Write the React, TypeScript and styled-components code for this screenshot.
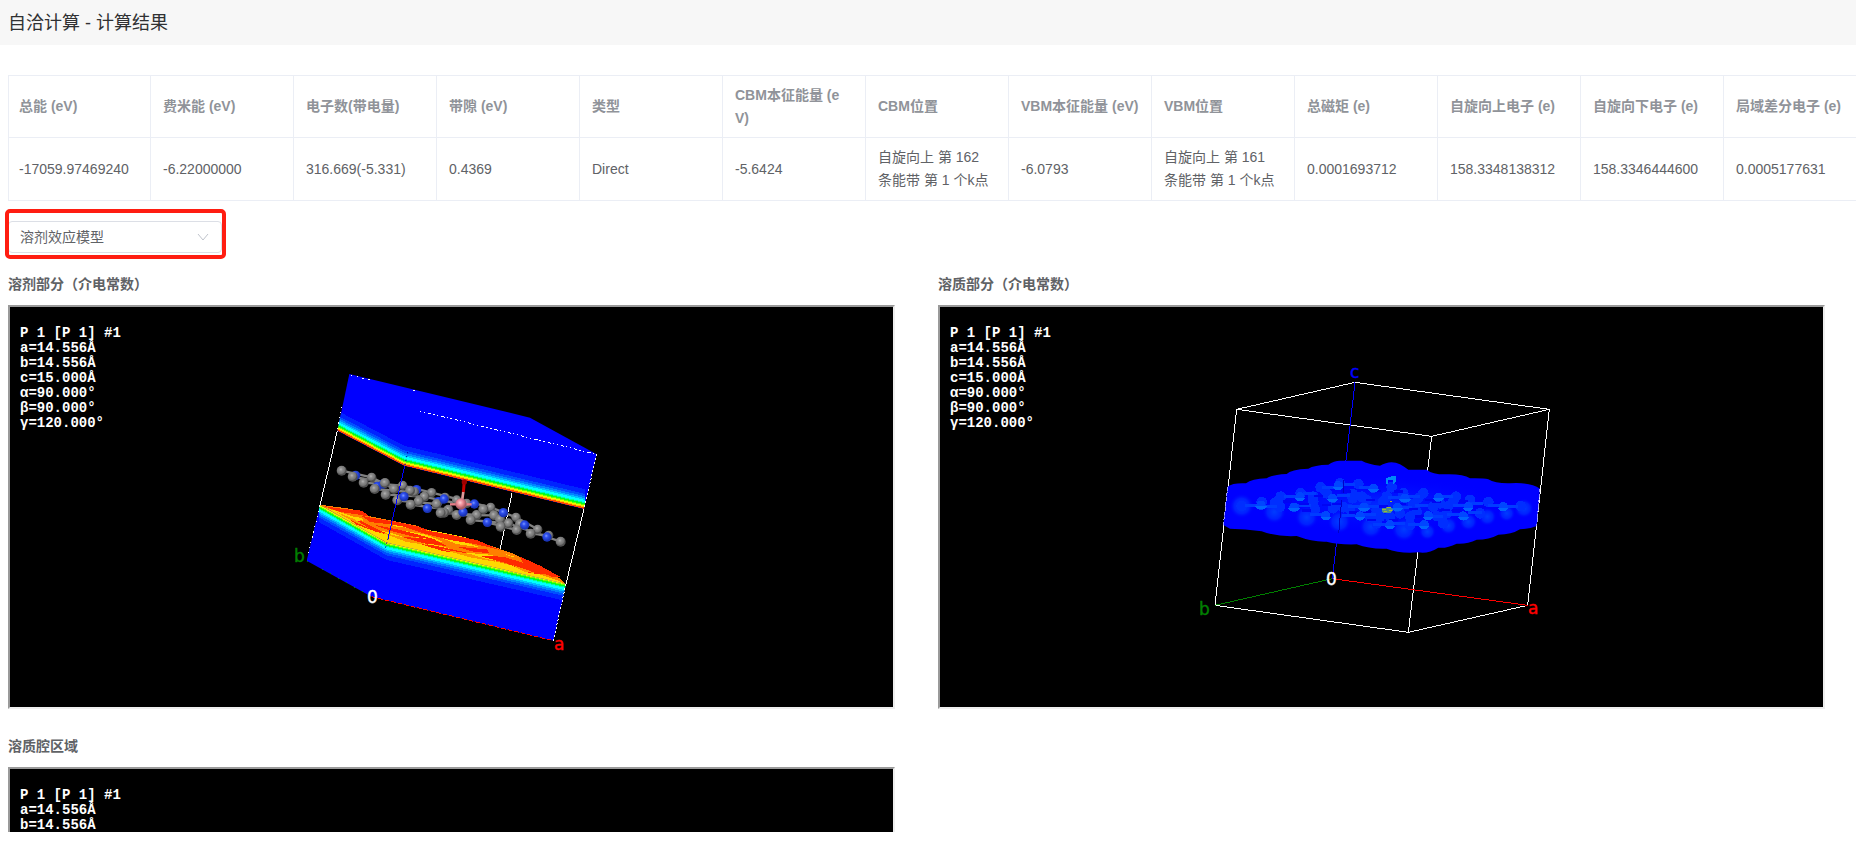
import React from "react";
import styled, { createGlobalStyle } from "styled-components";

const GlobalStyle = createGlobalStyle`
  * { box-sizing: border-box; }
  body {
    margin: 0;
    background: #fff;
    color: #606266;
    font-family: "Liberation Sans", "Noto Sans CJK SC", sans-serif;
    font-size: 14px;
  }
`;

const Page = styled.div`
  height: calc(100vh - 31px);
  overflow: hidden;
`;

const Header = styled.header`
  display: flex;
  align-items: center;
  height: 45px;
  padding: 0 8px;
  background: #f7f7f7;
`;

const Title = styled.h1`
  margin: 0;
  font-size: 18px;
  line-height: 24px;
  font-weight: 400;
  color: #303133;
`;

const TableScroller = styled.div`
  margin: 30px 0 20px 8px;
  overflow: hidden;
`;

const Table = styled.table`
  table-layout: fixed;
  width: 1859px;
  border-collapse: separate;
  border-spacing: 0;
  border-top: 1px solid #ebeef5;
`;

const cell = `
  width: 143px;
  padding: 0 12px;
  border-right: 1px solid #ebeef5;
  border-bottom: 1px solid #ebeef5;
  line-height: 23px;
  text-align: left;
  vertical-align: middle;
  word-break: break-all;
  &:first-child {
    padding: 0 10px;
    border-left: 1px solid #ebeef5;
  }
`;

const HeadCell = styled.th`
  ${cell}
  height: 62px;
  color: #909399;
  font-weight: 700;
`;

const DataCell = styled.td`
  ${cell}
  height: 63px;
`;

const SelectField = styled.div`
  position: relative;
  width: 214px;
  height: 32px;
  margin: 0 0 21px 8px;
  &::after {
    content: "";
    position: absolute;
    inset: -12px -4px -6px -3px;
    border: 4px solid #ff1d11;
    border-radius: 5px;
    pointer-events: none;
  }
`;

const Select = styled.select`
  appearance: none;
  width: 100%;
  height: 100%;
  padding: 0 30px 0 11px;
  border: 1px solid #dcdfe6;
  border-radius: 4px;
  background: #fff;
  color: #606266;
  font: inherit;
`;

const Chevron = styled.svg`
  position: absolute;
  top: 12px;
  right: 13px;
  width: 12px;
  height: 8px;
  pointer-events: none;
`;

const ViewerGrid = styled.main`
  display: grid;
  grid-template-columns: repeat(2, minmax(0, 1fr));
  gap: 27px 43px;
  padding: 0 31px 0 8px;
`;

const ViewerTitle = styled.h2`
  margin: 0 0 11px;
  font-size: 14px;
  line-height: 20px;
  font-weight: 700;
`;

const Viewer = styled.div`
  position: relative;
  height: 404px;
  border: 2px solid;
  border-color: #9a9a9a #eee #eee #9a9a9a;
  background: #000;
`;

const CellInfo = styled.pre`
  position: absolute;
  top: 19px;
  left: 10px;
  margin: 0;
  color: #fff;
  font: 700 14px/15px "Liberation Mono", monospace;
`;

const Scene = styled.svg`
  display: block;
  width: 100%;
  height: 400px;
`;

const AxisText = styled.text`
  font-family: "DejaVu Sans", sans-serif;
  font-size: 17px;
  stroke-width: 0.4px;
`;

const columns: [string, string][] = [
  ["总能 (eV)", "-17059.97469240"],
  ["费米能 (eV)", "-6.22000000"],
  ["电子数(带电量)", "316.669(-5.331)"],
  ["带隙 (eV)", "0.4369"],
  ["类型", "Direct"],
  ["CBM本征能量 (eV)", "-5.6424"],
  ["CBM位置", "自旋向上 第 162 条能带 第 1 个k点"],
  ["VBM本征能量 (eV)", "-6.0793"],
  ["VBM位置", "自旋向上 第 161 条能带 第 1 个k点"],
  ["总磁矩 (e)", "0.0001693712"],
  ["自旋向上电子 (e)", "158.3348138312"],
  ["自旋向下电子 (e)", "158.3346444600"],
  ["局域差分电子 (e)", "0.0005177631"],
];

const latticeLines = ["P 1 [P 1] #1", "a=14.556Å", "b=14.556Å"];
const cellLines = [...latticeLines, "c=15.000Å", "α=90.000°", "β=90.000°", "γ=120.000°"];

type Point = [number, number];

/* Colour scale of the dielectric map, by depth from the cut surface. */
const scale: [number, number, string][] = [
  [0, 5, "#ff4800"],
  [5, 8, "#ffc400"],
  [8, 11, "#e8ff00"],
  [11, 14, "#70ff00"],
  [14, 18, "#00ff20"],
  [18, 21, "#00ffa0"],
  [21, 28, "#00ffff"],
  [28, 33, "#00c0ff"],
  [33, 39, "#0084ff"],
  [39, 46, "#0050ff"],
  [46, 60, "#0024ff"],
];

const strip = (edge: Point[], from: number, to: number) =>
  [
    ...edge.map(([x, y]) => `${x},${y + from}`),
    ...[...edge].reverse().map(([x, y]) => `${x},${y + to}`),
  ].join(" ");

const upperEdge: Point[] = [[138, 210], [342, 317], [886, 448]];
const lowerEdge: Point[] = [[86, 434], [290, 548], [832, 672]];

const backAtoms: Point[] = [
  [245, 352], [338, 376], [425, 398], [500, 420], [602, 442], [678, 472], [743, 508], [776, 526],
  [465, 412], [530, 430],
];

const frontAtoms: Point[] = [
  [155, 332], [285, 369], [312, 387], [372, 396], [360, 392], [403, 410], [386, 424], [440, 432],
  [475, 449], [462, 458], [560, 465], [580, 448], [612, 466], [655, 490], [630, 478], [690, 492],
  [188, 350], [221, 368], [254, 387], [287, 404], [322, 421], [362, 434], [452, 459],
  [500, 465], [542, 480], [632, 500], [680, 510], [722, 521], [812, 545],
];

const blueAtoms: Point[] = [
  [197, 346], [262, 379], [280, 372], [380, 389], [445, 425], [553, 432],
];

const frontBlueAtoms: Point[] = [
  [342, 410], [462, 417], [412, 445], [519, 456], [640, 458], [592, 487], [704, 495], [771, 531],
];

const bonds: [number, number, number, number][] = [
  [155, 332, 245, 352], [188, 350, 285, 368], [220, 368, 338, 377], [254, 387, 360, 396],
  [287, 404, 400, 410], [322, 422, 440, 432], [338, 377, 425, 398], [425, 398, 602, 442],
  [362, 434, 475, 449], [400, 410, 513, 432], [452, 458, 560, 465], [500, 465, 612, 466],
  [602, 442, 678, 472], [542, 480, 655, 490], [592, 487, 680, 510], [678, 472, 743, 508],
  [655, 490, 771, 531], [722, 521, 776, 526], [771, 531, 812, 545], [245, 352, 312, 387],
];

const redStreaks = [
  "M100 438 L160 447 L215 452 L240 470 L200 463 L150 456 Z",
  "M180 480 L215 484 L250 502 L300 525 L260 516 L200 494 Z",
  "M215 468 L325 487 L382 499 L420 512 L360 503 L300 493 L240 486 Z",
  "M330 496 L400 510 L480 524 L560 540 L630 570 L560 553 L480 540 L400 520 Z",
  "M250 494 L330 510 L400 528 L440 540 L370 530 L300 512 Z",
  "M330 530 L430 538 L470 558 L400 550 Z",
  "M370 545 L450 560 L540 580 L460 574 Z",
  "M500 560 L590 568 L600 580 L550 575 Z",
  "M570 588 L640 590 L710 612 L770 642 L720 640 L650 610 Z",
  "M690 590 L750 617 L810 650 L790 652 L740 632 L700 612 Z",
];

const yellowStreaks = [
  "M150 463 L215 474 L220 482 L175 475 Z",
  "M110 444 L180 466 L240 498 L290 546 L200 500 Z",
  "M260 480 L330 494 L380 506 L320 500 Z",
  "M250 508 L300 517 L360 538 L460 560 L560 590 L680 620 L800 660 L828 674 L540 606 L290 550 Z",
  "M340 512 L400 522 L440 536 L460 546 L390 538 Z",
  "M440 528 L520 545 L570 562 L500 552 Z",
  "M520 578 L600 584 L655 600 L640 606 L560 592 Z",
  "M645 582 L680 592 L660 589 Z",
  "M705 618 L740 624 L790 648 L740 638 Z",
  "M400 507 L480 522 L540 535 L460 525 Z",
];

const depthStreaks = [
  "M270 516 L340 532 L420 556 L350 546 Z",
  "M450 566 L540 582 L620 606 L540 592 Z",
  "M660 612 L740 640 L700 634 Z",
  "M130 452 L190 476 L240 506 L190 484 Z",
];

function AxisLabel({ x, y, color, children }: { x: number; y: number; color: string; children: string }) {
  return <AxisText x={x} y={y} fill={color} stroke={color}>{children}</AxisText>;
}

function SolventScene() {
  return (
    <Scene viewBox="0 0 883 400" role="img" aria-label="溶剂部分（介电常数）">
      <defs>
        <radialGradient id="carbon" cx="42%" cy="38%">
          <stop offset="0" stopColor="#b4b4b4" />
          <stop offset="0.35" stopColor="#8c8c8c" />
          <stop offset="0.8" stopColor="#747474" />
          <stop offset="1" stopColor="#505050" />
        </radialGradient>
        <radialGradient id="nitrogen" cx="42%" cy="38%">
          <stop offset="0" stopColor="#7f9bff" />
          <stop offset="0.4" stopColor="#2f50f0" />
          <stop offset="1" stopColor="#1a34b8" />
        </radialGradient>
        <radialGradient id="metal" cx="42%" cy="38%">
          <stop offset="0" stopColor="#ffd0d4" />
          <stop offset="0.5" stopColor="#ee8c96" />
          <stop offset="1" stopColor="#a85c66" />
        </radialGradient>
        <clipPath id="upper"><path d="M178 42 L720 173 L920 283 L882 447 L342 317 L142 212 Z" /></clipPath>
        <clipPath id="lower"><path d="M90 434 L290 548 L828 672 L790 842 L245 710 L50 602 Z" /></clipPath>
      </defs>
      <g transform="translate(280 53) scale(0.33333)">
        <g stroke="#fff" strokeWidth="3" shapeRendering="crispEdges">
          <path d="M142 212 L90 436 M666 400 L630 570 M882 447 L828 672" />
        </g>
        <g clipPath="url(#upper)" shapeRendering="crispEdges">
          <rect width="960" height="480" fill="#00f" />
          {scale.map(([from, to, color]) => (
            <polygon key={color} points={strip(upperEdge, -from, -to)} fill={color} />
          ))}
        </g>
        <g shapeRendering="crispEdges">
          <path
            d="M90 434 L185 447 L230 467 L330 487 L380 497 L430 517 L550 540 L630 567 L680 585 L700 598 L740 615 L760 630 L800 648 L828 672 L290 552 Z"
            fill="#ff8000"
          />
          {yellowStreaks.map((d) => <path key={d} d={d} fill="#ffd800" />)}
          {redStreaks.map((d) => <path key={d} d={d} fill="#ff2a00" />)}
          {depthStreaks.map((d) => <path key={d} d={d} fill="#ff9600" />)}
        </g>
        <g clipPath="url(#lower)" shapeRendering="crispEdges">
          <rect y="420" width="960" height="440" fill="#00f" />
          {scale.slice(1).map(([from, to, color]) => (
            <polygon key={color} points={strip(lowerEdge, from - 8, to - 8)} fill={color} />
          ))}
        </g>
        <g fill="none" strokeWidth="3" shapeRendering="crispEdges">
          <path d="M390 153 L920 283" stroke="#fff" strokeDasharray="4 8 4 9 10 6" />
          <path d="M182 46 L250 62 M370 91 L385 95" stroke="#fff" strokeDasharray="5 13" />
          <path d="M920 283 L882 447 M828 672 L790 842" stroke="#fff" strokeDasharray="6 6" />
          <path d="M155 140 L142 212 M90 436 L55 580" stroke="#fff" strokeDasharray="4 12" />
          <path d="M245 710 L790 842" stroke="#f00" strokeDasharray="14 6" />
          <path d="M50 602 L245 710" stroke="#008000" strokeDasharray="3 24" />
        </g>
        <g stroke="#808080" strokeWidth="7">
          {bonds.map(([x1, y1, x2, y2]) => <line key={`${x1}-${y1}`} x1={x1} y1={y1} x2={x2} y2={y2} />)}
        </g>
        {backAtoms.map(([x, y]) => <circle key={x} cx={x} cy={y} r="14" fill="url(#carbon)" />)}
        {blueAtoms.map(([x, y]) => <circle key={x} cx={x} cy={y} r="14" fill="url(#nitrogen)" />)}
        {frontAtoms.map(([x, y]) => <circle key={x} cx={x} cy={y} r="15" fill="url(#carbon)" />)}
        {frontBlueAtoms.map(([x, y]) => <circle key={x} cx={x} cy={y} r="14" fill="url(#nitrogen)" />)}
        <path d="M480 433 H545" stroke="#e87f8a" strokeWidth="7" />
        <path d="M520 395 L516 425" stroke="#d99" strokeWidth="8" />
        <path d="M523 364 L520 396" stroke="#c80000" strokeWidth="9" />
        <circle cx="523" cy="366" r="8" fill="#a00000" />
        <circle cx="513" cy="432" r="17" fill="url(#metal)" />
        <path d="M344 318 L294 536" stroke="#00f" strokeWidth="3" shapeRendering="crispEdges" />
        <path d="M353 276 L344 318 M294 536 L285 568" stroke="#0000a8" strokeWidth="3" strokeDasharray="4 8" />
      </g>
      <AxisLabel x={284} y={255} color="#008000">b</AxisLabel>
      <AxisLabel x={357} y={296} color="#fff">0</AxisLabel>
      <AxisLabel x={544} y={343} color="#f00">a</AxisLabel>
    </Scene>
  );
}

const haloCentres: [number, number, number][] = [
  [185, 468, 38], [283, 486, 36], [380, 502, 36], [478, 515, 36], [573, 530, 36], [672, 538, 38],
  [742, 545, 26], [805, 527, 28], [865, 515, 28], [922, 500, 28], [980, 490, 26], [1032, 475, 30],
];

const brightAtoms: Point[] = [
  [243, 466], [360, 440], [342, 472], [458, 445], [437, 497], [552, 472], [580, 415], [540, 498],
  [630, 524], [652, 472], [675, 445], [733, 524], [745, 497], [775, 442], [865, 470], [850, 498],
  [970, 470], [475, 407],
];

const softAtoms: Point[] = [
  [185, 468], [245, 456], [302, 440], [362, 430], [422, 412], [480, 400], [535, 402], [300, 470],
  [285, 458], [400, 455], [405, 478], [400, 440], [490, 472], [510, 478], [518, 445], [518, 432],
  [620, 440], [610, 455], [635, 412], [600, 500], [630, 500], [690, 500], [710, 485], [700, 462],
  [730, 430], [715, 445], [760, 470], [805, 468], [828, 440], [800, 490], [790, 520], [925, 456],
  [900, 490], [1022, 468], [690, 525], [590, 480], [545, 440], [570, 500], [820, 455], [440, 430],
  [460, 475], [560, 450], [660, 490], [670, 430], [780, 460], [770, 498], [870, 450], [590, 520],
];

const bridges: Point[] = [
  [215, 467], [272, 470], [332, 438], [388, 430], [372, 467], [410, 494], [445, 412], [505, 403],
  [490, 435], [525, 468], [505, 495], [558, 412], [580, 468], [568, 494], [600, 522], [655, 520],
  [645, 443], [675, 473], [700, 440], [705, 522], [725, 466], [770, 498], [800, 438], [820, 494],
  [838, 466], [890, 460], [885, 486], [945, 467], [995, 468],
];

const gaps: Point[] = [
  [322, 455], [372, 462], [415, 438], [470, 462], [498, 425], [572, 450], [560, 485], [590, 424],
  [610, 470], [665, 462], [655, 425], [700, 478], [720, 500], [640, 510], [770, 456], [795, 480],
  [850, 455], [830, 482], [575, 510], [520, 488], [750, 450], [900, 472], [380, 482], [440, 465],
];

function SoluteScene() {
  return (
    <Scene viewBox="0 0 883 400" role="img" aria-label="溶质部分（介电常数）">
      <defs>
        <radialGradient id="halo">
          <stop offset="0" stopColor="#003cff" />
          <stop offset="0.6" stopColor="#0020ff" />
          <stop offset="1" stopColor="#0000ff" stopOpacity="0" />
        </radialGradient>
        <radialGradient id="upperHalo">
          <stop offset="0" stopColor="#0028ff" />
          <stop offset="1" stopColor="#0000ff" stopOpacity="0" />
        </radialGradient>
      </defs>
      <g transform="translate(240 43) scale(0.33333)">
        <g fill="none" strokeWidth="3" shapeRendering="crispEdges">
          <path
            d="M525 97 L170 178 L755 259 L1108 178 Z M170 178 L105 766 L685 847 L1043 766 L1108 178 M755 259 L685 847"
            stroke="#fff"
          />
          <path d="M457 686 L105 766" stroke="#008000" />
          <path d="M457 686 L1043 766" stroke="#f00" />
          <path d="M457 686 L525 97" stroke="#00f" />
        </g>
        <path
          d="M143 410 Q158 398 198 400 Q215 386 260 385 Q275 374 320 372 Q332 358 385 356 Q402 345 445 344 Q462 332 480 332 L545 332 Q565 343 600 347 Q632 328 660 343 Q672 350 685 359 L740 359 Q758 374 800 373 Q850 372 870 385 Q910 384 925 388 Q945 401 990 400 Q1050 396 1080 416 L1070 528 Q1048 537 1020 538 Q995 554 955 554 Q928 569 890 569 Q862 583 830 581 Q800 596 775 593 Q745 612 715 607 Q660 612 620 596 Q570 598 530 583 Q478 585 440 575 Q400 577 350 558 Q290 561 245 544 Q195 537 150 536 L130 525 Z"
          fill="#00f"
        />
        <ellipse cx="600" cy="462" rx="380" ry="85" fill="url(#upperHalo)" />
        {haloCentres.map(([x, y, r]) => <circle key={x} cx={x} cy={y} r={r} fill="url(#halo)" />)}
        <g shapeRendering="crispEdges">
          {softAtoms.map(([x, y]) => <circle key={`${x}-${y}`} cx={x} cy={y} r="16" fill="#002eff" />)}
          {bridges.map(([x, y]) => <rect key={`${x}-${y}`} x={x - 20} y={y - 4} width="40" height="9" fill="#003cff" />)}
          {gaps.map(([x, y]) => <rect key={`${x}-${y}`} x={x - 14} y={y - 4} width="28" height="7" fill="#0004f4" />)}
          {brightAtoms.map(([x, y]) => (
            <g key={`${x}-${y}`}>
              <circle cx={x} cy={y} r="14" fill="#0046ff" />
              <path d={`M${x - 17} ${y + 3} h34 l-8 9 h-18 Z`} fill="#0066ff" />
            </g>
          ))}
          <path d="M618 402 V386 L628 380 L648 378 V394 L640 402 V390 H624 V402 Z" fill="#0088f8" />
          <path d="M604 476 L626 470 L642 480 L634 488 L608 488 Z" fill="#488c90" />
          <path d="M606 478 H618 M622 474 H632 M612 485 H622 M628 482 H636 M630 454 H635" stroke="#a0b830" strokeWidth="3" />
          <path d="M490 390 V428 M485 450 L476 550" stroke="#0000c8" strokeWidth="3" />
          <path d="M143 412 L130 526 M1080 416 L1070 528" stroke="#a0a0ff" strokeWidth="3" strokeDasharray="10 5" />
        </g>
      </g>
      <AxisLabel x={410} y={71} color="#00f">c</AxisLabel>
      <AxisLabel x={259} y={308} color="#008000">b</AxisLabel>
      <AxisLabel x={386} y={278} color="#fff">0</AxisLabel>
      <AxisLabel x={588} y={307} color="#f00">a</AxisLabel>
    </Scene>
  );
}

interface ViewerBlockProps {
  title: string;
  info?: string[];
  children?: React.ReactNode;
}

function ViewerBlock({ title, info = cellLines, children }: ViewerBlockProps) {
  return (
    <section>
      <ViewerTitle>{title}</ViewerTitle>
      <Viewer>
        {children}
        <CellInfo>{info.join("\n")}</CellInfo>
      </Viewer>
    </section>
  );
}

export default function App() {
  return (
    <>
      <GlobalStyle />
      <Page>
        <Header>
          <Title>自洽计算 - 计算结果</Title>
        </Header>
        <TableScroller>
          <Table>
            <thead>
              <tr>{columns.map(([name]) => <HeadCell key={name} scope="col">{name}</HeadCell>)}</tr>
            </thead>
            <tbody>
              <tr>{columns.map(([name, value]) => <DataCell key={name}>{value}</DataCell>)}</tr>
            </tbody>
          </Table>
        </TableScroller>
        <SelectField>
          <Select aria-label="模型" defaultValue="solvent">
            <option value="solvent">溶剂效应模型</option>
          </Select>
          <Chevron viewBox="0 0 12 8" aria-hidden="true">
            <path d="M1 1 L6 7 L11 1" fill="none" stroke="#c0c4cc" />
          </Chevron>
        </SelectField>
        <ViewerGrid>
          <ViewerBlock title="溶剂部分（介电常数）"><SolventScene /></ViewerBlock>
          <ViewerBlock title="溶质部分（介电常数）"><SoluteScene /></ViewerBlock>
          <ViewerBlock title="溶质腔区域" info={latticeLines} />
        </ViewerGrid>
      </Page>
    </>
  );
}
